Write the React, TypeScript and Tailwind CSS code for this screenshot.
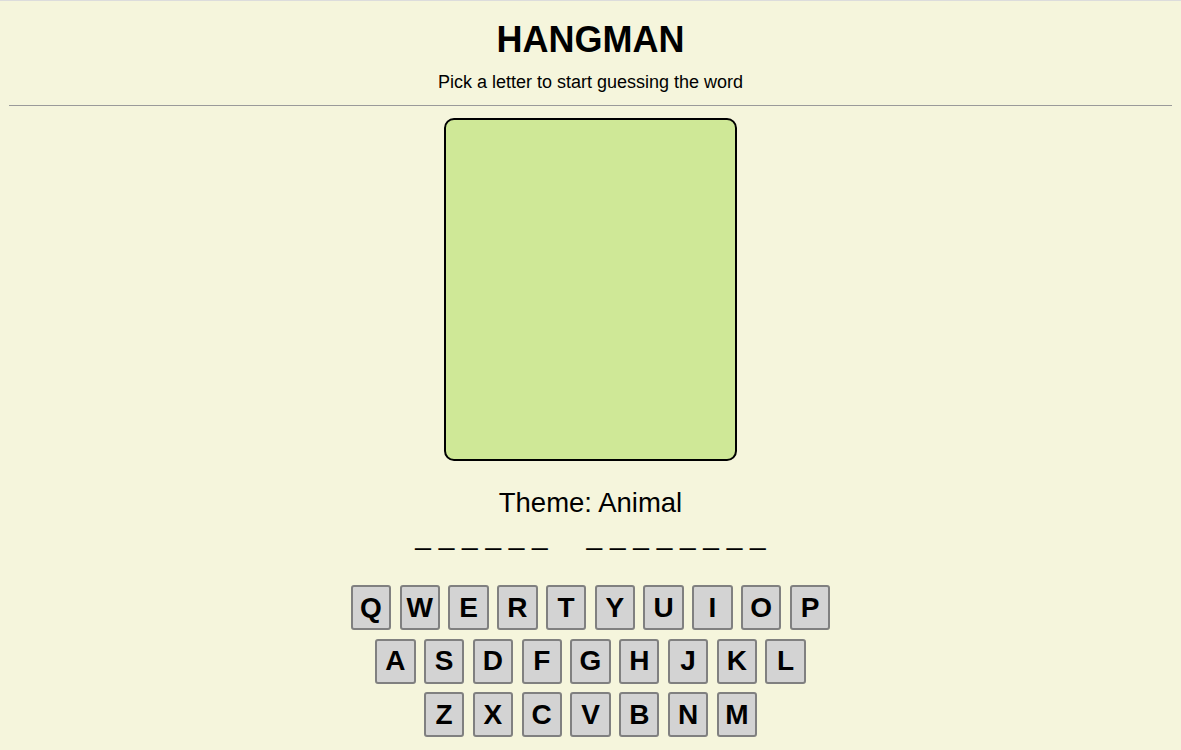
import React from "react";

const rows = ["QWERTYUIOP", "ASDFGHJKL", "ZXCVBNM"];

export default function App() {
  return (
    <div
      className="min-h-[750px] w-full bg-[#f5f5dc] border-t border-[#dcdcdc] text-black"
      style={{ fontFamily: '"Liberation Sans", Arial, sans-serif' }}
    >
      <h1 className="mt-[18px] text-center text-[36px] leading-[42px] font-bold">HANGMAN</h1>
      <p className="mt-[11px] text-center text-[18px] leading-[21px]">
        Pick a letter to start guessing the word
      </p>
      <div className="mx-[9px] mt-[12px] h-0 border-t border-[#9a9a9a]" />
      <div className="mt-[12px] flex justify-center">
        <div className="w-[293px] h-[343px] rounded-[10px] border-2 border-black bg-[#cfe897]" />
      </div>
      <p className="mt-[26px] text-center text-[27.5px] leading-[32px]">Theme: Animal</p>
      <p className="text-center text-[28px] leading-[32px] whitespace-pre">
        {"_ _ _ _ _ _     _ _ _ _ _ _ _ _"}
      </p>
      <div className="mt-[34px] flex flex-col items-center gap-y-[8.6px]">
        {rows.map((row) => (
          <div key={row} className="flex gap-x-[8.4px]">
            {row.split("").map((ch) => (
              <button
                key={ch}
                className="w-[40.4px] h-[45px] flex items-center justify-center rounded-[3px] border-2 border-[#808080] bg-[#d3d3d3] text-[28px] font-bold leading-none text-black"
                style={{ fontFamily: '"Liberation Sans", Arial, sans-serif' }}
              >
                {ch}
              </button>
            ))}
          </div>
        ))}
      </div>
    </div>
  );
}
